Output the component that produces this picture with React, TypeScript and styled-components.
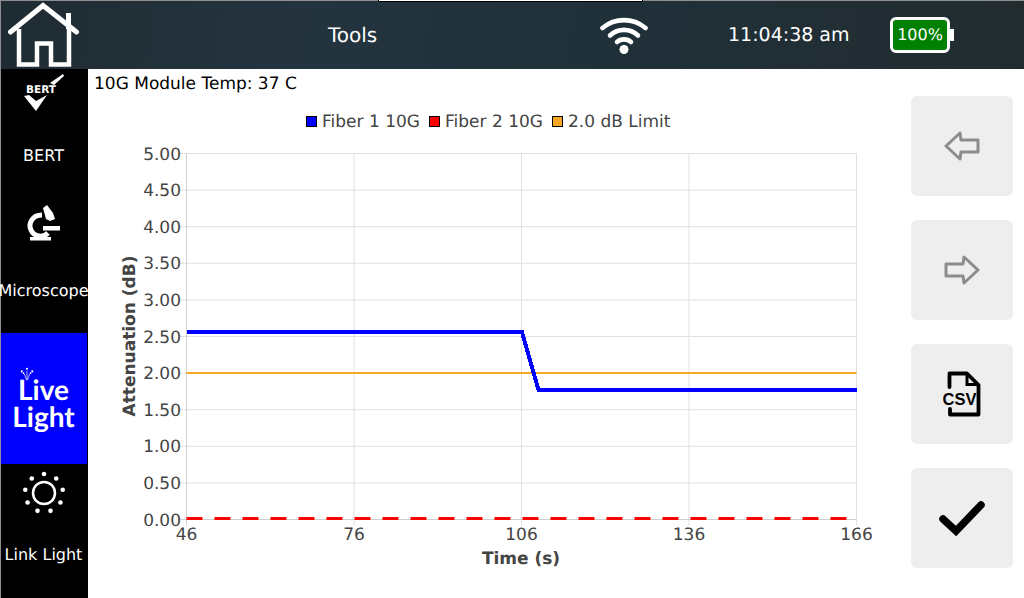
import { FC } from 'react';
import styled, { createGlobalStyle } from 'styled-components';

const GlobalStyle = createGlobalStyle`
    html, body {
        margin: 0;
        padding: 0;
        background: #fff;
    }
    body {
        font-family: "DejaVu Sans", sans-serif;
        text-rendering: geometricPrecision;
    }
`

const yTicks = ['5.00', '4.50', '4.00', '3.50', '3.00', '2.50', '2.00', '1.50', '1.00', '0.50', '0.00']
const xTicks = [46, 76, 106, 136, 166]

const PLOT = { left: 186.5, right: 856.5, top: 153.5, bottom: 519.5 }
const xPos = (sec: number) => PLOT.left + ((sec - 46) / 120) * (PLOT.right - PLOT.left)
const yPos = (db: number) => PLOT.bottom - (db / 5) * (PLOT.bottom - PLOT.top)

const legend = [
    { label: 'Fiber 1 10G', color: '#0000ff' },
    { label: 'Fiber 2 10G', color: '#ff0000' },
    { label: '2.0 dB Limit', color: '#f5a623' },
]

const Chart: FC = () => (
    <ChartSvg width="812" height="529" viewBox="88 69 812 529">
        {yTicks.map((t, i) => {
            const y = yPos(5 - i * 0.5)
            return <line key={t} x1={PLOT.left - 7} x2={PLOT.right} y1={y} y2={y} stroke="#e0e0e0" strokeWidth="1" />
        })}
        {xTicks.map((t) => (
            <line key={t} x1={xPos(t)} x2={xPos(t)} y1={PLOT.top} y2={PLOT.bottom + 6} stroke="#e0e0e0" strokeWidth="1" />
        ))}
        <line x1={PLOT.left} x2={PLOT.left} y1={PLOT.top} y2={PLOT.bottom + 6} stroke="#cfcfcf" strokeWidth="1" />
        <line x1={PLOT.left - 7} x2={PLOT.right} y1={PLOT.bottom} y2={PLOT.bottom} stroke="#cfcfcf" strokeWidth="1" />

        {yTicks.map((t, i) => (
            <AxisText key={t} x={181} y={yPos(5 - i * 0.5) + 6} textAnchor="end">{t}</AxisText>
        ))}
        {xTicks.map((t) => (
            <AxisText key={t} x={xPos(t)} y={540} textAnchor="middle">{t}</AxisText>
        ))}
        <AxisTitle x={521} y={564} textAnchor="middle">Time (s)</AxisTitle>
        <AxisTitle x={135} y={336} textAnchor="middle" transform="rotate(-90 135 336)">Attenuation (dB)</AxisTitle>

        <line x1={PLOT.left} x2={PLOT.right} y1={373} y2={373} stroke="#f5a623" strokeWidth="2" />
        <polyline
            points={`${PLOT.left},332 522,332 538.5,390 ${PLOT.right},390`}
            fill="none"
            stroke="#0000ff"
            strokeWidth="4"
            shapeRendering="crispEdges"
        />
        <line x1={PLOT.left} x2={848} y1={518.5} y2={518.5} stroke="#ff0000" strokeWidth="3" strokeDasharray="16 12" />

        {legend.map((l, i) => {
            const x = [306, 429, 552][i]
            return (
                <g key={l.label}>
                    <rect x={x + 0.5} y={116.5} width={10} height={10} fill={l.color} stroke="#000" strokeWidth="1" />
                    <LegendText x={x + 16} y={127}>{l.label}</LegendText>
                </g>
            )
        })}
    </ChartSvg>
)

const App: FC = () => {
    return (
        <>
            <GlobalStyle />
            <Screen>
                <Header>
                    <HomeIcon viewBox="8 1 72 67" width="72" height="67">
                        <path
                            d="M19 28 V63.5 H37 V42.5 H51 V63.5 H69 V28"
                            fill="none"
                            stroke="#fff"
                            strokeWidth="4.5"
                        />
                        <path d="M10.5 31 L43 4.5 L76.5 31" fill="none" stroke="#fff" strokeWidth="5" strokeLinecap="round" />
                        <rect x="66" y="12" width="5" height="16" fill="#fff" />
                    </HomeIcon>
                    <Title>Tools</Title>
                    <TopNotch />
                    <WifiIcon viewBox="0 0 48 38" width="48" height="38">
                        <g fill="none" stroke="#fff" strokeWidth="4.6" strokeLinecap="round">
                            <path d="M2.5 12 C15 1.5 33 1.5 45.5 12" />
                            <path d="M10 19.5 C18 12 30 12 38 19.5" />
                            <path d="M17 26 C21 22.5 27 22.5 31 26" />
                        </g>
                        <circle cx="24" cy="33.5" r="4.5" fill="#fff" />
                    </WifiIcon>
                    <Clock>11:04:38 am</Clock>
                    <Battery>
                        <BatteryBody>100%</BatteryBody>
                        <BatteryCap />
                    </Battery>
                </Header>
                <Body>
                    <Sidebar>
                        <NavItem>
                            <NavIconSlot $height={71}>
                                <svg viewBox="20 71 46 42" width="46" height="42">
                                    <path d="M49 83 L62 74 L63 76 L53 85 Z" fill="#fff" />
                                    <BertMark x="40" y="93" textAnchor="middle">BERT</BertMark>
                                    <path d="M23 96 L28 95 L35 101 L46 95 L35 111 Z" fill="#fff" />
                                </svg>
                            </NavIconSlot>
                            <NavLabel>BERT</NavLabel>
                        </NavItem>
                        <NavItem>
                            <NavIconSlot $height={75}>
                                <svg viewBox="24 205 38 42" width="38" height="42">
                                    <path d="M41 218 C31 218 27 227 30 233 C33 240 42 241 47 236" fill="none" stroke="#fff" strokeWidth="5" />
                                    <path d="M42 211 L46 208 L52 216 L54 222 L49 224 L45 222 Z" fill="#fff" />
                                    <rect x="42" y="229" width="17" height="4.5" fill="#fff" />
                                    <rect x="29" y="240" width="21" height="3.5" fill="#fff" />
                                </svg>
                            </NavIconSlot>
                            <NavLabel>Microscope</NavLabel>
                        </NavItem>
                        <NavItem $active>
                            <LiveIcon viewBox="0 0 16 16" width="14" height="14">
                                <g fill="#fff">
                                    <circle cx="2" cy="5" r="1.2" />
                                    <circle cx="4" cy="7" r="1" />
                                    <circle cx="8" cy="2" r="1.2" />
                                    <circle cx="12" cy="7" r="1" />
                                    <circle cx="14" cy="5" r="1.2" />
                                </g>
                                <path d="M5 8 L7.5 15 M8 4 V15 M11 8 L8.5 15" stroke="#fff" strokeWidth="0.8" fill="none" />
                            </LiveIcon>
                            <LiveText>Live<br />Light</LiveText>
                        </NavItem>
                        <NavItem>
                            <NavIconSlot $height={75} $top={7}>
                                <svg viewBox="0 0 44 44" width="44" height="44">
                                    <circle cx="22" cy="22" r="11" fill="none" stroke="#fff" strokeWidth="2.5" />
                                    {[0, 40, 80, 120, 160, 200, 240, 280, 320].map((a) => (
                                        <circle
                                            key={a}
                                            cx={22 + 19 * Math.sin((a * Math.PI) / 180)}
                                            cy={22 - 19 * Math.cos((a * Math.PI) / 180)}
                                            r="2.3"
                                            fill="#fff"
                                        />
                                    ))}
                                </svg>
                            </NavIconSlot>
                            <NavLabel>Link Light</NavLabel>
                        </NavItem>
                    </Sidebar>
                    <Content>
                        <TempLine>10G Module Temp: 37 C</TempLine>
                        <Chart />
                    </Content>
                    <Actions>
                        <ActionButton>
                            <svg viewBox="0 0 36 30" width="36" height="30">
                                <path d="M2 15 L16 2 L17 9 H34 V21 H17 L16 28 Z" fill="none" stroke="#8c8c8c" strokeWidth="3" strokeLinejoin="round" />
                            </svg>
                        </ActionButton>
                        <ActionButton>
                            <svg viewBox="0 0 36 30" width="36" height="30">
                                <path d="M34 15 L20 2 L19 9 H2 V21 H19 L20 28 Z" fill="none" stroke="#8c8c8c" strokeWidth="3" strokeLinejoin="round" />
                            </svg>
                        </ActionButton>
                        <ActionButton>
                            <svg viewBox="0 0 38 46" width="38" height="46">
                                <path d="M6.5 16 V2.5 H24 L35.5 14 V43.5 H7 V38" fill="none" stroke="#000" strokeWidth="3.8" strokeLinejoin="round" strokeLinecap="round" />
                                <path d="M24 3 V13.5 H35" fill="none" stroke="#000" strokeWidth="3" />
                                <CsvText x="16.5" y="34" textAnchor="middle">CSV</CsvText>
                            </svg>
                        </ActionButton>
                        <ActionButton>
                            <svg viewBox="0 0 46 36" width="46" height="36">
                                <path d="M4 19 L17 31 L42 5" fill="none" stroke="#000" strokeWidth="7.5" strokeLinecap="round" />
                            </svg>
                        </ActionButton>
                    </Actions>
                </Body>
            </Screen>
        </>
    )
}

export default App

const Screen = styled.div`
    width: 1024px;
    height: 598px;
    display: flex;
    flex-direction: column;
    overflow: hidden;
    background: #fff;
`

const Header = styled.header`
    position: relative;
    height: 69px;
    display: flex;
    align-items: center;
    box-sizing: border-box;
    border-top: 1px solid #8f8f8f;
    border-left: 1px solid #8f8f8f;
    background: linear-gradient(100deg, #1f2b32 0%, #24343f 30%, #203039 60%, #222c2f 100%);
    color: #fff;
`

const HomeIcon = styled.svg`
    flex: none;
    margin-left: 7px;
`

const Title = styled.div`
    margin-left: 248px;
    width: 272px;
    font-size: 20px;
`

const TopNotch = styled.div`
    position: absolute;
    top: -1px;
    left: 377px;
    width: 265px;
    height: 2px;
    box-sizing: border-box;
    background: #fff;
    border: 1px solid #000;
    border-top: none;
`

const WifiIcon = styled.svg`
    flex: none;
`

const Clock = styled.div`
    margin-left: 80px;
    width: 162px;
    font-size: 19px;
`

const Battery = styled.div`
    display: flex;
    align-items: center;
    margin-top: -1px;
`

const BatteryBody = styled.div`
    width: 60px;
    height: 36px;
    box-sizing: border-box;
    border: 3px solid #fff;
    border-radius: 6px;
    background: #008000;
    color: #fff;
    font-size: 16px;
    line-height: 30px;
    text-align: center;
`

const BatteryCap = styled.div`
    width: 4px;
    height: 12px;
    background: #fff;
`

const Body = styled.div`
    flex: 1;
    display: flex;
    min-height: 0;
`

const Sidebar = styled.nav`
    width: 88px;
    flex: none;
    box-sizing: border-box;
    border-left: 1px solid #8f8f8f;
    background: #000;
    display: grid;
    grid-template-columns: minmax(0, 1fr);
    grid-template-rows: 131px 133px 131px 134px;
`

const NavItem = styled.div<{ $active?: boolean }>`
    display: flex;
    flex-direction: column;
    align-items: center;
    position: relative;
    min-width: 0;
    margin-right: 1px;
    padding-right: 1px;
    background: ${(p) => (p.$active ? '#0000ff' : '#000')};
    color: #fff;
`

const NavIconSlot = styled.div<{ $height: number; $top?: number }>`
    height: ${(p) => p.$height}px;
    box-sizing: border-box;
    padding-top: ${(p) => p.$top ?? 2}px;
    display: flex;
    align-items: flex-start;
    justify-content: center;
`

const NavLabel = styled.div`
    font-size: 16px;
    line-height: 20px;
    margin-top: 6px;
    white-space: nowrap;
`

const LiveIcon = styled.svg`
    position: absolute;
    left: 19px;
    top: 34px;
`

const LiveText = styled.div`
    font-family: "Lato", sans-serif;
    font-weight: 700;
    font-size: 28px;
    line-height: 27px;
    text-align: center;
    margin-top: 43px;
`

const BertMark = styled.text`
    fill: #fff;
    font-family: "DejaVu Sans", sans-serif;
    font-size: 10.5px;
    font-weight: 600;
`

const Content = styled.main`
    position: relative;
    width: 812px;
    flex: none;
`

const TempLine = styled.div`
    position: absolute;
    left: 6px;
    top: 5px;
    font-size: 17px;
    color: #000;
    z-index: 1;
`

const ChartSvg = styled.svg`
    display: block;
`

const AxisText = styled.text`
    fill: #444;
    font-family: "DejaVu Sans", sans-serif;
    font-size: 17px;
`

const AxisTitle = styled.text`
    fill: #444;
    font-family: "DejaVu Sans", sans-serif;
    font-size: 17px;
    font-weight: 700;
`

const LegendText = styled.text`
    fill: #444;
    font-family: "DejaVu Sans", sans-serif;
    font-size: 17px;
`

const CsvText = styled.text`
    fill: #000;
    font-family: "Liberation Sans", sans-serif;
    font-size: 16.5px;
    font-weight: 700;
`

const Actions = styled.aside`
    flex: none;
    margin-left: 11px;
    padding-top: 27px;
    display: flex;
    flex-direction: column;
    gap: 24px;
`

const ActionButton = styled.button`
    width: 102px;
    height: 100px;
    border: none;
    border-radius: 6px;
    background: #eeeeee;
    padding: 0;
    display: flex;
    align-items: center;
    justify-content: center;
`
